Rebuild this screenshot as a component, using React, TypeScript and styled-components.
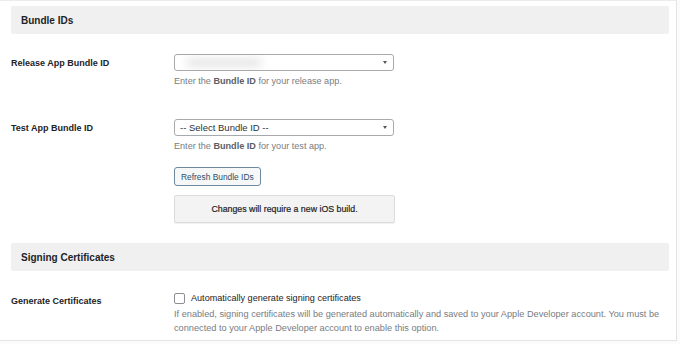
import styled, { createGlobalStyle } from "styled-components"

const GlobalStyle = createGlobalStyle`
  html, body {
    margin: 0;
    padding: 0;
    background: #fbfbfb;
  }
  * {
    box-sizing: border-box;
  }
`

const Panel = styled.div`
  width: 678px;
  height: 341px;
  margin-left: -1px;
  background: #fff;
  border: 1px solid #e4e4e4;
  border-top-color: #ececec;
  padding: 5px 7px 0 11px;
  font-family: "Liberation Sans", Arial, sans-serif;
  color: #1d2327;
  overflow: hidden;
`

const SectionHeader = styled.div<{ $top: number }>`
  height: 28px;
  margin-top: ${(p) => p.$top}px;
  background: #f0f0f0;
  border-radius: 2px;
  padding-left: 10px;
  display: flex;
  align-items: center;
  font-size: 10px;
  font-weight: 700;
`

const FieldRow = styled.div<{ $top: number }>`
  display: grid;
  grid-template-columns: 163px 1fr;
  margin-top: ${(p) => p.$top}px;
`

const Label = styled.div`
  font-size: 9px;
  font-weight: 700;
  line-height: 17px;
  padding-top: 1px;
`

const Field = styled.div`
  display: flex;
  flex-direction: column;
  align-items: flex-start;
`

const Select = styled.div`
  width: 220px;
  height: 17px;
  border: 1px solid #a7aaad;
  border-radius: 3px;
  background: #fff;
  display: flex;
  align-items: center;
  justify-content: space-between;
  padding: 0 6px 0 5px;
  font-size: 9.5px;
  color: #2c3338;
  overflow: hidden;
`

const BlurredValue = styled.span`
  display: inline-block;
  width: 76px;
  height: 9px;
  margin-left: 6px;
  border-radius: 5px;
  background: #e6e6e6;
  filter: blur(4px);
`

const Caret = styled.span`
  width: 0;
  height: 0;
  border-left: 2.5px solid transparent;
  border-right: 2.5px solid transparent;
  border-top: 3px solid #50575e;
`

const Help = styled.p<{ $size?: number }>`
  margin: 3px 0 0;
  font-size: ${(p) => p.$size ?? 9.1}px;
  line-height: 14px;
  color: #787c82;

  b {
    font-weight: 700;
    color: #5a5e63;
  }
`

const Button = styled.button`
  margin-top: 14px;
  height: 19px;
  padding: 0 6px;
  border: 1px solid #6d8aa0;
  border-radius: 3px;
  background: #f6f7f7;
  color: #2a4f6d;
  font-family: "Liberation Sans", Arial, sans-serif;
  font-size: 8.4px;
`

const Notice = styled.div`
  margin-top: 9px;
  width: 221px;
  height: 28px;
  background: #f3f3f3;
  border: 1px solid #dcdcde;
  border-radius: 2px;
  box-shadow: 0 1px 1px rgba(0, 0, 0, 0.06);
  display: flex;
  align-items: center;
  justify-content: center;
  font-size: 8.8px;
  color: #1d2327;
  -webkit-text-stroke: 0.2px #1d2327;
`

const CheckLine = styled.label`
  display: flex;
  align-items: center;
  gap: 6px;
  height: 12px;
  font-size: 9.1px;
  color: #1d2327;
`

const CheckBox = styled.span`
  width: 11px;
  height: 11px;
  border: 1px solid #8c8f94;
  border-radius: 2px;
  background: #fff;
`

export default function App() {
  return (
    <>
      <GlobalStyle />
      <Panel>
        <SectionHeader $top={0}>Bundle IDs</SectionHeader>

        <FieldRow $top={20}>
          <Label>Release App Bundle ID</Label>
          <Field>
            <Select>
              <BlurredValue />
              <Caret />
            </Select>
            <Help>
              Enter the <b>Bundle ID</b> for your release app.
            </Help>
          </Field>
        </FieldRow>

        <FieldRow $top={31}>
          <Label>Test App Bundle ID</Label>
          <Field>
            <Select>
              <span>-- Select Bundle ID --</span>
              <Caret />
            </Select>
            <Help>
              Enter the <b>Bundle ID</b> for your test app.
            </Help>
            <Button>Refresh Bundle IDs</Button>
            <Notice>Changes will require a new iOS build.</Notice>
          </Field>
        </FieldRow>

        <SectionHeader $top={20}>Signing Certificates</SectionHeader>

        <FieldRow $top={21}>
          <Label>Generate Certificates</Label>
          <Field>
            <CheckLine>
              <CheckBox />
              Automatically generate signing certificates
            </CheckLine>
            <Help $size={9.2}>
              If enabled, signing certificates will be generated automatically and saved to your Apple Developer
              account. You must be connected to your Apple Developer account to enable this option.
            </Help>
          </Field>
        </FieldRow>
      </Panel>
    </>
  )
}
